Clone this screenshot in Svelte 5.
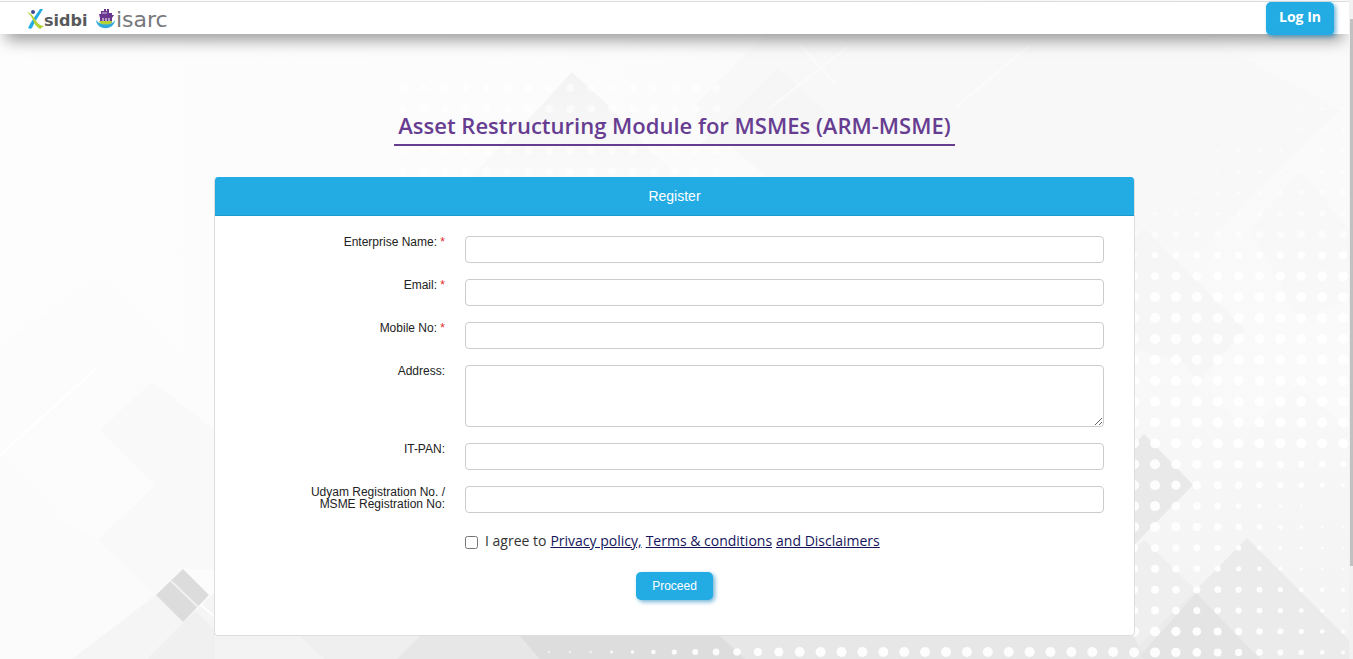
<script>
    const fields = [
        { id: "enterprise", label: "Enterprise Name:", type: "text", required: true },
        { id: "email", label: "Email:", type: "email", required: true },
        { id: "mobile", label: "Mobile No:", type: "tel", required: true },
        { id: "address", label: "Address:", type: "area" },
        { id: "pan", label: "IT-PAN:", type: "text" },
        { id: "udyam", label: "Udyam Registration No. / MSME Registration No:", type: "text" }
    ];

    // halftone dots: radius at the left and at the right end of every row
    const rows = [
        [0, 2], [0, 2], [1, 2], [1, 2], [1, 3], [2, 3], [3, 4], [3, 4], [4, 5],
        [5, 5], [5, 5], [5, 5], [5, 5], [5, 5], [5, 5], [5, 5], [5, 5], [5, 3],
        [5, 2], [5, 0], [5, 1], [4, 1], [4, 1], [4, 2], [4, 2], [5, 2], [5, 2]
    ];
    const step = 20.9;
    const dots = [];
    rows.forEach(([left, right], row) => {
        for (let col = -1; col < 10; col++) {
            const r = left + ((right - left) * Math.max(0, col)) / 9;
            if (r > 0.4) dots.push({ x: 1155 + col * step, y: 109 + row * step, r });
        }
    });
    for (let col = 2; col <= 29; col++) {
        dots.push({ x: 1155 - col * step, y: 652, r: Math.max(1, 5 - Math.max(0, col - 17) * 0.4) });
    }
    for (let row = 0; row < 5; row++) {
        for (let col = 0; col < 16; col++) {
            dots.push({ x: 403 + col * step, y: 88 + row * step, r: 4 });
        }
    }
</script>

<div class="page">
    <svg class="backdrop" viewBox="0 0 1349 659" preserveAspectRatio="xMidYMin slice" aria-hidden="true">
        <defs>
            <linearGradient id="base" x1="0" y1="0" x2="1" y2="0">
                <stop offset="0" stop-color="#fdfdfd" />
                <stop offset=".45" stop-color="#fcfcfc" />
                <stop offset=".75" stop-color="#f8f8f8" />
                <stop offset="1" stop-color="#fafafa" />
            </linearGradient>
            <linearGradient id="fade" x1="0" y1="0" x2="0" y2="1">
                <stop offset="0" stop-color="#f3f3f3" />
                <stop offset="1" stop-color="#fafafa" />
            </linearGradient>
            <linearGradient id="slope" x1="0" y1="0" x2="0" y2="1">
                <stop offset="0" stop-color="#f9f9f9" />
                <stop offset="1" stop-color="#f3f3f3" />
            </linearGradient>
        </defs>
        <rect width="1349" height="659" fill="url(#base)" />
        <path d="M690 110L766 34H1200L1340 110L1200 250H850Z" fill="#f8f8f8" />
        <path d="M700 145L778 68L830 115L800 145Z" fill="#f6f6f6" />
        <path d="M470 177L537 110L572 72L610 107L650 150L680 177Z" fill="url(#fade)" />
        <path d="M0 345L100 278L215 390V659H0Z" fill="#fcfcfc" />
        <path d="M0 459L60 520L98 540L156 595L72 659H0Z" fill="#fbfbfb" />
        <path d="M100 430L152 382L215 430V545L156 485Z" fill="#f9f9f9" />
        <path d="M98 540L156 485L215 540V570L183 569L156 595Z" fill="#f9f9f9" />
        <path d="M72 659L156 595L183 622L215 592V659Z" fill="#f5f5f5" />
        <path d="M147 659L195 611L215 630V659Z" fill="#f0f0f0" />
        <path d="M0 455L98 367M172 580L215 617L250 659" fill="none" stroke="#fff" stroke-width="2" />
        <path d="M156 595L183 569L209 595L183 622Z" fill="#dcdcdc" />
        <path d="M171 581L198 607" stroke="#f0f0f0" stroke-width="2" />
        <path d="M955 108L1030 45M770 108L850 45M800 45L835 84" stroke="#fbfbfb" stroke-width="2" />
        <path d="M1134 238L1144 228L1245 330L1190 390L1134 350Z" fill="#f6f6f6" />
        <path d="M1250 230L1300 170L1349 230V300L1300 320Z" fill="#f8f8f8" />
        <path d="M1134 350L1180 360L1247 430L1298 385L1349 430V659H1134Z" fill="url(#slope)" />
        <path d="M1134 445L1144 434L1193 485L1134 545Z" fill="#e9e9e9" />
        <path d="M1134 550L1144 540L1196 590L1134 650Z" fill="#efefef" />
        <path d="M1196 590L1247 538L1349 640V659H1134V650Z" fill="#ebebeb" />
        <path d="M1137 659L1196 593L1260 659Z" fill="#e4e4e4" />
        <path d="M215 636H1134L1144 659H215Z" fill="#e7e7e7" />
        <path d="M215 636H300L325 659H215Z" fill="#f3f3f3" />
        <path d="M300 636H420L397 659H325Z" fill="#efefef" />
        <path d="M520 636H720L745 659H540Z" fill="#ddd" />
        {#each dots as dot}
            <circle cx={dot.x} cy={dot.y} r={dot.r} fill="#fff" opacity={dot.y < 250 ? 0.5 : 0.9} />
        {/each}
    </svg>

    <header>
        <a class="brand" href="#home" aria-label="sidbi isarc">
            <svg width="150" height="24" viewBox="0 0 150 24" aria-hidden="true">
                <path d="M14 2C10 8 5 14 2 21C4 22 5 22 6 21C9 14 13 9 17 2Z" fill="#21ace3" />
                <path d="M1 5C5 6 7 9 9 12C11 16 14 19 18 19L14 22C10 19 8 17 7 13C6 10 4 8 1 5Z" fill="#b3d335" />
                <circle cx="7" cy="5" r="2" fill="#3c4a94" />
                <text class="word bold" x="18" y="19">sidbi</text>
                <path d="M74 11L73 7H75V4H78V2H80V4H81V2H83V6H86V8H88L86 11Z" fill="#68358f" />
                <path d="M76 6H81" stroke="#d9c6e6" />
                <path d="M74 11H86V16H74Z" fill="#68358f" />
                <path d="M77 11V14M80 11V14M83 11V14" stroke="#fff" />
                <path d="M73 14H86C86 20 74 20 73 14Z" fill="#b3d335" />
                <path d="M70 13C71 24 88 24 89 13C86 19 74 19 70 13Z" fill="#30aadd" />
                <text class="word large" x="90" y="20">isarc</text>
            </svg>
        </a>
        <button class="login" type="button">Log In</button>
    </header>

    <main>
        <h1>Asset Restructuring Module for MSMEs (ARM-MSME)</h1>

        <form class="card">
            <h2>Register</h2>
            <div class="fields">
                {#each fields as field}
                    <label for={field.id}>
                        {field.label}
                        {#if field.required}<span class="star">*</span>{/if}
                    </label>
                    {#if field.type === "area"}
                        <textarea id={field.id}></textarea>
                    {:else}
                        <input id={field.id} type={field.type} />
                    {/if}
                {/each}
                <div class="agree">
                    <input id="agree" type="checkbox" />
                    <label for="agree">I agree to</label>
                    <a href="#privacy">Privacy policy,</a>
                    <a href="#terms">Terms &amp; conditions</a>
                    <a href="#disclaimers">and Disclaimers</a>
                </div>
            </div>
            <button class="proceed" type="button">Proceed</button>
        </form>
    </main>
</div>
<div class="scrollbar" aria-hidden="true"><span></span></div>

<style>
    :global(#app) {
        display: flex;
        min-height: 100vh;
    }
    .page {
        position: relative;
        flex: 1;
        overflow: hidden;
        font-family: "Open Sans", sans-serif;
        color: #333;
    }
    .backdrop {
        position: absolute;
        inset: 0;
        width: 100%;
        height: 100%;
    }

    header {
        position: relative;
        display: flex;
        justify-content: space-between;
        align-items: flex-start;
        box-sizing: border-box;
        height: 33px;
        margin-top: 1px;
        padding: 0 15px 0 26px;
        border-top: 1px solid #ddd;
        background: #fff;
        box-shadow: 0 12px 16px -6px rgba(0, 0, 0, 0.4);
    }
    .brand {
        display: flex;
        padding-top: 5px;
    }
    .word {
        font-family: "DejaVu Sans", sans-serif;
        fill: #77787b;
    }
    .large {
        font-size: 22px;
    }
    .bold {
        font-size: 16px;
        font-weight: bold;
        fill: #58595b;
    }
    .login,
    .proceed {
        border: none;
        border-radius: 5px;
        background: #23ace3;
        color: #fff;
        box-shadow: 2px 2px 4px rgba(20, 130, 190, 0.6);
        cursor: pointer;
    }
    .login {
        flex: none;
        height: 33px;
        padding: 0 13px 4px;
        font: bold 14px "Open Sans", sans-serif;
    }

    main {
        position: relative;
        display: flex;
        flex-direction: column;
        align-items: center;
        padding: 76px 16px 23px;
    }
    h1 {
        margin: 0 0 31px;
        padding: 0 4px 4px;
        border-bottom: 2px solid #663d91;
        color: #663d91;
        font-size: 22px;
        font-weight: 600;
        line-height: 30px;
    }
    .card {
        display: flex;
        flex-direction: column;
        align-items: center;
        box-sizing: border-box;
        width: 100%;
        max-width: 921px;
        padding-bottom: 35px;
        border: 1px solid #ddd;
        border-top: none;
        border-radius: 4px;
        background: #fff;
        overflow: hidden;
    }
    h2 {
        align-self: stretch;
        margin: 0;
        border-bottom: 1px solid #1e98cb;
        background: #23ace3;
        color: #fff;
        font: 14px/38px "Liberation Sans", Arial, sans-serif;
        text-align: center;
    }
    .fields {
        display: grid;
        align-self: stretch;
        grid-template-columns: 230px 1fr;
        gap: 16px 20px;
        padding: 20px 30px 20px 0;
    }
    .fields > label {
        justify-self: end;
        max-width: 140px;
        color: #222;
        font: 12px/12px "Liberation Sans", Arial, sans-serif;
        text-align: right;
    }
    .star {
        color: #e02b2b;
    }
    .fields > input,
    textarea {
        box-sizing: border-box;
        width: 100%;
        height: 27px;
        margin: 0;
        padding: 4px 8px;
        border: 1px solid #ccc;
        border-radius: 4px;
        background: #fff;
        font: 12px "Liberation Sans", Arial, sans-serif;
    }
    textarea {
        display: block;
        height: 62px;
        resize: vertical;
    }
    .agree {
        display: flex;
        flex-wrap: wrap;
        align-items: center;
        grid-column: 2;
        column-gap: 4px;
        padding: 2px 0 1px;
        font-size: 14px;
        line-height: 20px;
    }
    .agree input {
        width: 13px;
        height: 13px;
        margin: 2px 3px 0 0;
    }
    .agree a {
        color: #14145c;
        text-decoration: underline;
    }
    .proceed {
        height: 28px;
        padding: 0 16px;
        font: 12px "Liberation Sans", Arial, sans-serif;
    }

    .scrollbar {
        width: 4px;
        background: #f1f1f1;
    }
    .scrollbar span {
        display: block;
        height: 83vh;
        margin: 19px 0 0 1px;
        background: #c1c1c1;
    }
</style>
